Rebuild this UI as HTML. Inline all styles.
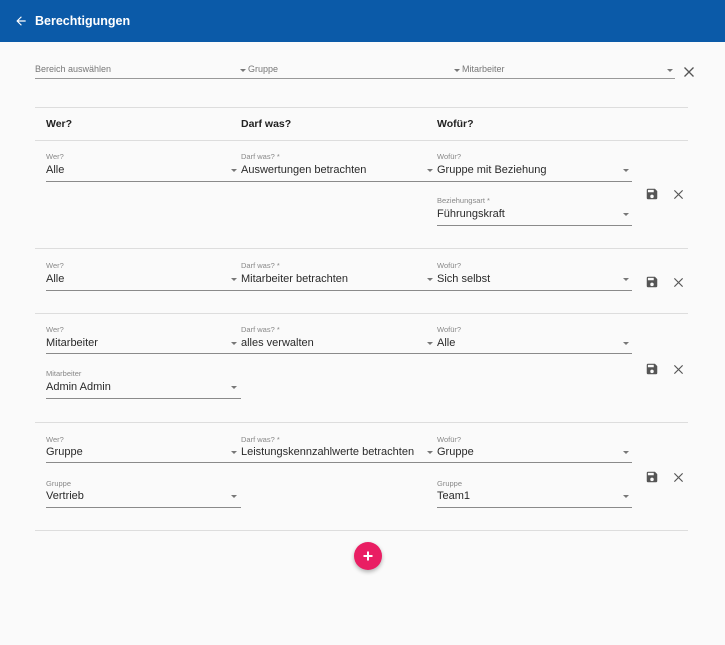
<!DOCTYPE html>
<html><head><meta charset="utf-8"><style>
*{margin:0;padding:0;box-sizing:border-box}
body{width:725px;height:645px;background:#fafafa;font-family:"Liberation Sans",sans-serif;position:relative;overflow:hidden;color:#222}
.hdr{position:absolute;left:0;top:0;width:725px;height:42px;background:#0b5aa8;color:#fff}
.hdr .t{position:absolute;left:35px;top:14px;font-size:12.5px;font-weight:bold}
.a{position:absolute}
.lbl{position:absolute;font-size:7.5px;color:#888}
.val{position:absolute;font-size:11px;color:#2a2a2a}
.ul{position:absolute;height:1px;background:#8a8a8a}
.hl{position:absolute;left:35px;width:653px;height:1px;background:#ddd}
.ar{position:absolute;width:0;height:0;border-left:3px solid transparent;border-right:3px solid transparent;border-top:3px solid #777}
.th{position:absolute;top:118px;font-size:10.5px;font-weight:bold;color:#222}
.ph{position:absolute;font-size:9px;color:#777;top:64px}
</style></head><body>
<div class="hdr">
<svg class="a" style="left:14px;top:14px" width="14" height="14" viewBox="0 0 24 24"><path d="M20 11H7.8l5.6-5.6L12 4l-8 8 8 8 1.4-1.4L7.8 13H20z" fill="#fff"/></svg>
<div class="t">Berechtigungen</div></div>

<div class="ph" style="left:35px">Bereich auswählen</div>
<div class="ar" style="left:240px;top:69px"></div><div class="ph" style="left:248px">Gruppe</div>
<div class="ar" style="left:454px;top:69px"></div><div class="ph" style="left:462px">Mitarbeiter</div>
<div class="ar" style="left:667px;top:69px"></div>
<div class="ul" style="left:35px;top:78px;width:640px;background:#999"></div>
<svg class="a" style="left:683px;top:66px" width="12" height="12" viewBox="0 0 12 12"><path d="M1.5 1.5l9 9M10.5 1.5l-9 9" stroke="#555" stroke-width="1.3"/></svg>

<div class="hl" style="top:107px"></div>
<div class="th" style="left:46px">Wer?</div>
<div class="th" style="left:241px">Darf was?</div>
<div class="th" style="left:437px">Wofür?</div>
<div class="hl" style="top:140px"></div>

<!-- row1 -->
<div class="lbl" style="left:46px;top:152px">Wer?</div><div class="val" style="left:46px;top:164px">Alle</div><div class="ar" style="left:231px;top:169px"></div><div class="ul" style="left:46px;top:181px;width:195px"></div>
<div class="lbl" style="left:241px;top:152px">Darf was? *</div><div class="val" style="left:241px;top:164px">Auswertungen betrachten</div><div class="ar" style="left:427px;top:169px"></div><div class="ul" style="left:241px;top:181px;width:196px"></div>
<div class="lbl" style="left:437px;top:152px">Wofür?</div><div class="val" style="left:437px;top:164px">Gruppe mit Beziehung</div><div class="ar" style="left:623px;top:169px"></div><div class="ul" style="left:437px;top:181px;width:195px"></div>
<div class="lbl" style="left:437px;top:196px">Beziehungsart *</div><div class="val" style="left:437px;top:208px">Führungskraft</div><div class="ar" style="left:623px;top:213px"></div><div class="ul" style="left:437px;top:225px;width:195px"></div>
<div class="hl" style="top:248px"></div>

<!-- row2 -->
<div class="lbl" style="left:46px;top:261px">Wer?</div><div class="val" style="left:46px;top:273px">Alle</div><div class="ar" style="left:231px;top:278px"></div><div class="ul" style="left:46px;top:290px;width:195px"></div>
<div class="lbl" style="left:241px;top:261px">Darf was? *</div><div class="val" style="left:241px;top:273px">Mitarbeiter betrachten</div><div class="ar" style="left:427px;top:278px"></div><div class="ul" style="left:241px;top:290px;width:196px"></div>
<div class="lbl" style="left:437px;top:261px">Wofür?</div><div class="val" style="left:437px;top:273px">Sich selbst</div><div class="ar" style="left:623px;top:278px"></div><div class="ul" style="left:437px;top:290px;width:195px"></div>
<div class="hl" style="top:313px"></div>

<!-- row3 -->
<div class="lbl" style="left:46px;top:325px">Wer?</div><div class="val" style="left:46px;top:337px">Mitarbeiter</div><div class="ar" style="left:231px;top:342px"></div><div class="ul" style="left:46px;top:353px;width:195px"></div>
<div class="lbl" style="left:241px;top:325px">Darf was? *</div><div class="val" style="left:241px;top:337px">alles verwalten</div><div class="ar" style="left:427px;top:342px"></div><div class="ul" style="left:241px;top:353px;width:196px"></div>
<div class="lbl" style="left:437px;top:325px">Wofür?</div><div class="val" style="left:437px;top:337px">Alle</div><div class="ar" style="left:623px;top:342px"></div><div class="ul" style="left:437px;top:353px;width:195px"></div>
<div class="lbl" style="left:46px;top:369px">Mitarbeiter</div><div class="val" style="left:46px;top:381px">Admin Admin</div><div class="ar" style="left:231px;top:386px"></div><div class="ul" style="left:46px;top:398px;width:195px"></div>
<div class="hl" style="top:422px"></div>

<!-- row4 -->
<div class="lbl" style="left:46px;top:435px">Wer?</div><div class="val" style="left:46px;top:446px">Gruppe</div><div class="ar" style="left:231px;top:451px"></div><div class="ul" style="left:46px;top:462px;width:195px"></div>
<div class="lbl" style="left:241px;top:435px">Darf was? *</div><div class="val" style="left:241px;top:446px">Leistungskennzahlwerte betrachten</div><div class="ar" style="left:427px;top:451px"></div><div class="ul" style="left:241px;top:462px;width:196px"></div>
<div class="lbl" style="left:437px;top:435px">Wofür?</div><div class="val" style="left:437px;top:446px">Gruppe</div><div class="ar" style="left:623px;top:451px"></div><div class="ul" style="left:437px;top:462px;width:195px"></div>
<div class="lbl" style="left:46px;top:479px">Gruppe</div><div class="val" style="left:46px;top:490px">Vertrieb</div><div class="ar" style="left:231px;top:495px"></div><div class="ul" style="left:46px;top:507px;width:195px"></div>
<div class="lbl" style="left:437px;top:479px">Gruppe</div><div class="val" style="left:437px;top:490px">Team1</div><div class="ar" style="left:623px;top:495px"></div><div class="ul" style="left:437px;top:507px;width:195px"></div>
<div class="hl" style="top:530px"></div>

<!-- icons -->
<svg class="a" style="left:645px;top:187px" width="14" height="14" viewBox="0 0 24 24"><path d="M17 3H5a2 2 0 0 0-2 2v14a2 2 0 0 0 2 2h14a2 2 0 0 0 2-2V7l-4-4zm-5 16a3 3 0 1 1 0-6 3 3 0 0 1 0 6zm3-10H5V5h10v4z" fill="#555"/></svg>
<svg class="a" style="left:673px;top:189px" width="11" height="11" viewBox="0 0 12 12"><path d="M1.5 1.5l9 9M10.5 1.5l-9 9" stroke="#555" stroke-width="1.3"/></svg>
<svg class="a" style="left:645px;top:275px" width="14" height="14" viewBox="0 0 24 24"><path d="M17 3H5a2 2 0 0 0-2 2v14a2 2 0 0 0 2 2h14a2 2 0 0 0 2-2V7l-4-4zm-5 16a3 3 0 1 1 0-6 3 3 0 0 1 0 6zm3-10H5V5h10v4z" fill="#555"/></svg>
<svg class="a" style="left:673px;top:277px" width="11" height="11" viewBox="0 0 12 12"><path d="M1.5 1.5l9 9M10.5 1.5l-9 9" stroke="#555" stroke-width="1.3"/></svg>
<svg class="a" style="left:645px;top:362px" width="14" height="14" viewBox="0 0 24 24"><path d="M17 3H5a2 2 0 0 0-2 2v14a2 2 0 0 0 2 2h14a2 2 0 0 0 2-2V7l-4-4zm-5 16a3 3 0 1 1 0-6 3 3 0 0 1 0 6zm3-10H5V5h10v4z" fill="#555"/></svg>
<svg class="a" style="left:673px;top:364px" width="11" height="11" viewBox="0 0 12 12"><path d="M1.5 1.5l9 9M10.5 1.5l-9 9" stroke="#555" stroke-width="1.3"/></svg>
<svg class="a" style="left:645px;top:470px" width="14" height="14" viewBox="0 0 24 24"><path d="M17 3H5a2 2 0 0 0-2 2v14a2 2 0 0 0 2 2h14a2 2 0 0 0 2-2V7l-4-4zm-5 16a3 3 0 1 1 0-6 3 3 0 0 1 0 6zm3-10H5V5h10v4z" fill="#555"/></svg>
<svg class="a" style="left:673px;top:472px" width="11" height="11" viewBox="0 0 12 12"><path d="M1.5 1.5l9 9M10.5 1.5l-9 9" stroke="#555" stroke-width="1.3"/></svg>

<div class="a" style="left:354px;top:542px;width:28px;height:28px;border-radius:50%;background:#e91e63;box-shadow:0 2px 4px rgba(0,0,0,.3)">
<svg class="a" style="left:8px;top:8px" width="12" height="12" viewBox="0 0 12 12"><path d="M6 1.5v9M1.5 6h9" stroke="#fff" stroke-width="2"/></svg></div>
</body></html>
